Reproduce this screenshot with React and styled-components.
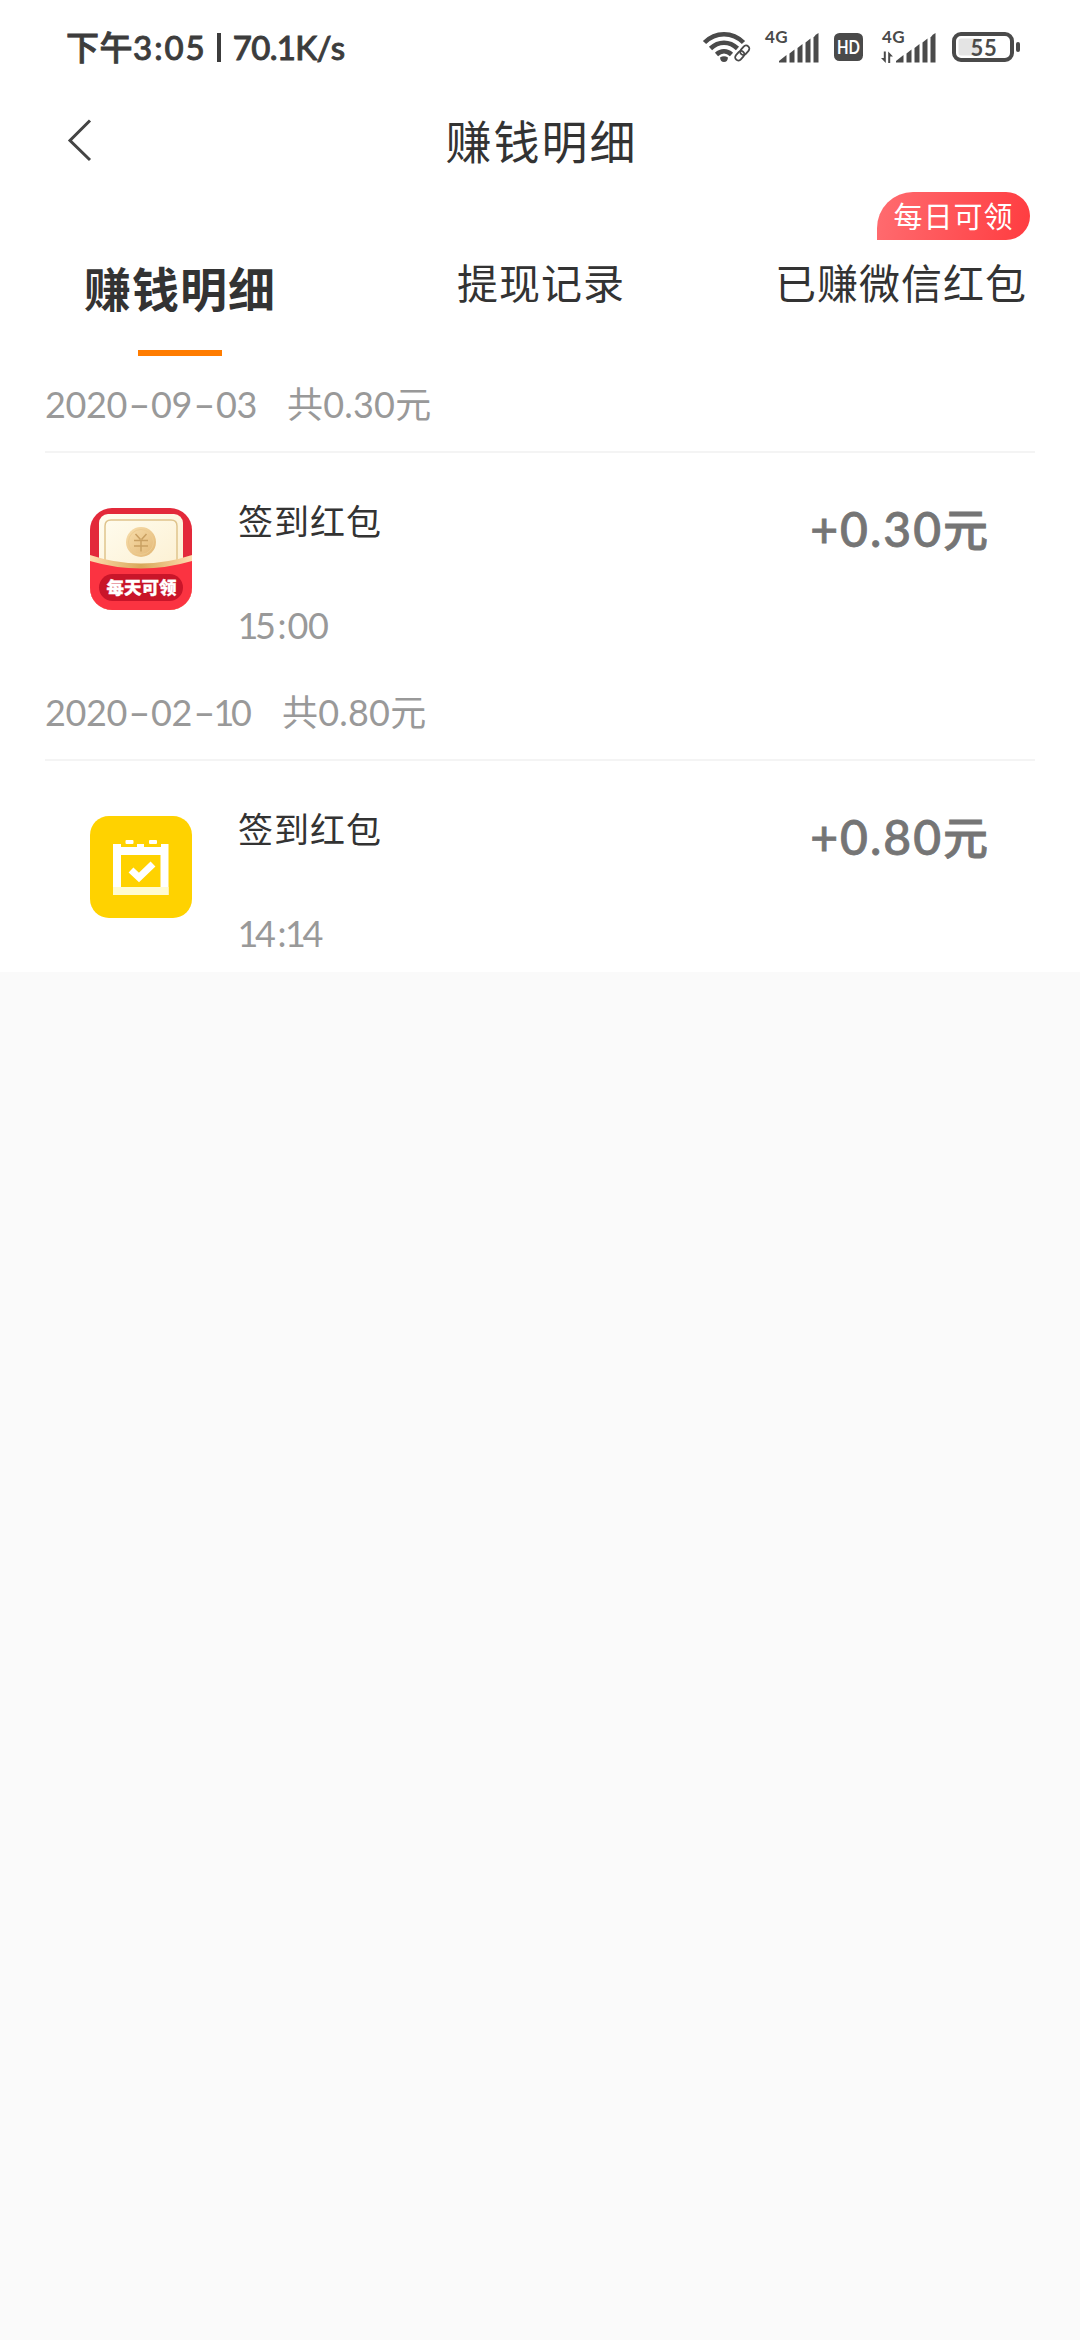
import React from 'react';
import styled, { createGlobalStyle } from 'styled-components';

const GlobalStyle = createGlobalStyle`
  * { box-sizing: border-box; }
  html, body { margin: 0; padding: 0; background: #fafafa; }
  body {
    font-family: Lato, "Noto Sans CJK SC", sans-serif;
    color: #333;
    font-kerning: none;
  }
`;

const Screen = styled.div`
  width: 1080px;
  min-height: 2340px;
  background: #fafafa;
`;

const StatusBar = styled.header`
  display: flex;
  align-items: center;
  justify-content: space-between;
  height: 94px;
  padding: 0 59px 0 66px;
  background: #fff;
`;

const Clock = styled.div`
  display: flex;
  align-items: center;
  font-size: 33px;
  line-height: 40px;
  font-weight: 500;
  color: #3c3c3c;
  white-space: pre;
  -webkit-text-stroke: 0.9px #3c3c3c;
`;

const ClockPart = styled.span`
  letter-spacing: ${(p) => p.$spacing}px;
`;

const ClockRule = styled.i`
  width: 4px;
  height: 29px;
  margin: 0 12px 0 10px;
  background: #3c3c3c;
`;

const StatusIcons = styled.div`
  display: flex;
  align-items: center;
  svg { display: block; }
`;

const Gap = styled.span`
  width: ${(p) => p.$w}px;
`;

const NavBar = styled.nav`
  display: grid;
  grid-template-columns: 120px 1fr 120px;
  align-items: center;
  height: 98px;
  background: #fff;
`;

const BackButton = styled.button`
  display: flex;
  margin: -6px 0 0 66px;
  padding: 0;
  border: 0;
  background: none;
`;

const PageTitle = styled.h1`
  margin: 0;
  padding: 0 0 2px 3px;
  font-size: 46px;
  line-height: 60px;
  font-weight: 400;
  letter-spacing: 2px;
  text-align: center;
`;

const Tabs = styled.div`
  display: grid;
  grid-template-columns: repeat(3, 360px);
  height: 164px;
  background: #fff;
`;

const Tab = styled.div`
  position: relative;
  display: flex;
  flex-direction: column;
  align-items: center;
  padding-top: ${(p) => (p.$active ? 67 : 62)}px;
  padding-left: ${(p) => (p.$active ? 0 : 2)}px;
  font-size: ${(p) => (p.$active ? 47 : 41)}px;
  font-weight: ${(p) => (p.$active ? 700 : 400)};
  line-height: 60px;
  letter-spacing: 1px;
  white-space: nowrap;
`;

const TabLine = styled.i`
  width: 84px;
  height: 6px;
  margin-top: 31px;
  background: #ff7c00;
`;

const Badge = styled.span`
  position: absolute;
  top: 0;
  left: 157px;
  width: 153px;
  height: 48px;
  border-radius: 36px 24px 24px 0;
  background: linear-gradient(100deg, #ff6c70, #ff3c40);
  color: #fff;
  font-size: 29px;
  line-height: 49px;
  letter-spacing: 1px;
  text-align: center;
`;

const Section = styled.section`
  display: flex;
  flex-direction: column;
  height: 308px;
  padding: 0 45px;
  background: #fff;
`;

const DayHeader = styled.div`
  display: flex;
  align-items: center;
  height: 97px;
  border-bottom: 2px solid #f4f4f4;
  font-size: 36px;
  line-height: 44px;
  color: #999;
`;

const DateText = styled.span`
  width: ${(p) => p.$width}px;
  letter-spacing: -0.4px;
  white-space: nowrap;
`;

const DayTotal = styled.span`
  letter-spacing: 0.2px;
`;

const Dash = styled.span`
  display: inline-block;
  width: 24px;
  text-align: center;
  transform: scaleX(1.7);
`;

const NarrowOne = styled.span`
  margin: 0 -3px 0 -2.5px;
`;

const Colon = styled.span`
  margin: 0 1.5px 0 2px;
`;

const Entry = styled.div`
  display: flex;
  align-items: flex-start;
  padding: 0 45px;
`;

const EntryIcon = styled.svg`
  display: block;
  width: 102px;
  height: 102px;
  margin-top: 55px;
`;

const EntryBody = styled.div`
  display: flex;
  flex: 1;
  flex-direction: column;
  gap: 60px;
  padding: 46px 0 0 46px;
`;

const EntryTitle = styled.div`
  font-size: 35px;
  line-height: 44px;
  letter-spacing: 1px;
`;

const EntryTime = styled.div`
  padding-left: 2px;
  font-size: 36px;
  line-height: 44px;
  letter-spacing: -0.4px;
  color: #999;
`;

const Amount = styled.div`
  margin: 48px 2px 0 0;
  font-size: 48px;
  line-height: 56px;
  font-weight: 500;
  letter-spacing: 2px;
  color: #757575;
  -webkit-text-stroke: 0.8px #757575;
  span { font-size: 45px; letter-spacing: 0; }
`;

const INK = '#4a4a4a';

const WifiIcon = () => (
  <svg width="50" height="32" viewBox="0 0 50 32" fill="none">
    <g stroke={INK} strokeWidth="4.6">
      <path d="M2.5 11.5C13.5 .4 30.500 .4 41.500 11.500" />
      <path d="M8.500 17.500C16.500 9.800 27.500 9.800 35.500 17.500" />
      <path d="M14.500 23.500C19 19.300 25 19.300 29.500 23.500" />
    </g>
    <path d="M18 26.500Q22 24 26 26.500Q25.500 31 22 31Q18.500 31 18 26.500Z" fill={INK} />
    <g stroke="#fff" strokeWidth="6">
      <rect x="38" y="15.500" width="7" height="11" rx="3.500" transform="rotate(42 41.500 21)" />
    </g>
    <g stroke={INK} strokeWidth="1.800" strokeLinecap="round">
      <rect x="39.500" y="14" width="6.500" height="10.500" rx="3.250" transform="rotate(42 42.750 19.250)" />
      <rect x="34.500" y="19.500" width="6.500" height="10.500" rx="3.250" transform="rotate(42 37.750 24.750)" />
    </g>
  </svg>
);

const SignalIcon = ({ data }) => (
  <svg width="58" height="50" viewBox="0 -8 58 50" fill={INK}>
    <text x="1" y="12.500" fontFamily="Lato, sans-serif" fontWeight="700" fontSize="17" letterSpacing="0.5">4G</text>
    {data && (
      <g>
        <path d="M2.800 21.500H4.800V33L0 28H2.800Z" />
        <path d="M7.200 33V21.500L12 26.500H9.200V33Z" />
      </g>
    )}
    <path d="M15 32.500V31L22.500 25V32.500Z" />
    <path d="M25.500 23.500L30.500 19.500V32.500H25.500Z" />
    <path d="M33.500 18L38.500 14V32.500H33.500Z" />
    <path d="M41.500 12.500L46.500 8.500V32.500H41.500Z" />
    <path d="M49.500 7.500Q51.500 4 54.500 3V32.500H49.500Z" />
  </svg>
);

const HdIcon = () => (
  <svg width="29" height="29" viewBox="0 0 29 29">
    <rect width="29" height="28" rx="5.500" fill={INK} />
    <text x="3" y="20.500" textLength="23" lengthAdjust="spacingAndGlyphs" fontFamily="Lato, sans-serif" fontWeight="700" fontSize="18" fill="#fff">HD</text>
  </svg>
);

const BatteryIcon = () => (
  <svg width="69" height="30" viewBox="0 0 69 30">
    <rect x="2" y="2" width="58" height="26" rx="7" fill="#fff" stroke={INK} strokeWidth="4" />
    <path d="M9 6.500H27V23.500H9Q6.500 23.500 6.500 21V9Q6.500 6.500 9 6.500Z" fill="#e4e4e4" />
    <text x="32" y="23.500" textAnchor="middle" fontFamily="Lato, sans-serif" fontWeight="700" fontSize="22" letterSpacing="0.8" fill={INK}>55</text>
    <rect x="64" y="10" width="4" height="10" rx="2" fill={INK} />
  </svg>
);

const RedPacketIcon = () => (
  <EntryIcon viewBox="0 0 102 102">
    <defs>
      <clipPath id="packet"><rect width="102" height="102" rx="22" /></clipPath>
      <linearGradient id="card" x1="0" y1="0" x2="1" y2="1">
        <stop offset="0" stopColor="#fffdf0" /><stop offset="1" stopColor="#fcefd0" />
      </linearGradient>
      <linearGradient id="coin" x1="0" y1="0" x2="1" y2="1">
        <stop offset="0" stopColor="#f8dfad" /><stop offset="1" stopColor="#e2b674" />
      </linearGradient>
      <linearGradient id="rim" x1="0" y1="0" x2="1" y2="0">
        <stop offset="0" stopColor="#ffdcae" /><stop offset=".5" stopColor="#d8a85a" /><stop offset="1" stopColor="#ffdcae" />
      </linearGradient>
    </defs>
    <g clipPath="url(#packet)">
      <rect width="102" height="102" fill="#e3293a" />
      <rect x="9" y="6" width="84" height="60" rx="9" fill="url(#card)" />
      <path d="M15 60V18Q15 12 21 12H81Q87 12 87 18V60" fill="none" stroke="#dfc48c" strokeWidth="1.500" />
      <circle cx="51" cy="34" r="15" fill="url(#coin)" />
      <circle cx="51" cy="34" r="12.500" fill="none" stroke="#eccb90" strokeWidth="1" />
      <path d="M45.500 26L50.500 31.500M56.500 26L51.500 31.500M44 32.500H58M44 38H58M51 32V43.500" stroke="#c9a062" strokeWidth="1.500" fill="none" />
      <path d="M0 47Q51 64 102 47V102H0Z" fill="url(#rim)" />
      <path d="M0 53Q51 68 102 53V102H0Z" fill="#fb3341" />
      <rect x="9" y="66" width="84" height="27" rx="13.500" fill="#c91529" />
      <text x="51.500" y="86" textAnchor="middle" fontFamily="'Noto Sans CJK SC', sans-serif" fontWeight="900" fontSize="17.500" fill="#fff" stroke="#fff" strokeWidth=".3">每天可领</text>
    </g>
  </EntryIcon>
);

const CalendarIcon = () => (
  <EntryIcon viewBox="0 0 102 102">
    <rect width="102" height="102" rx="19" fill="#ffd200" />
    <path d="M23 28H31V31H47V28H54V31H71V28H78.500V79H23Z" fill="#fff" />
    <rect x="23" y="71" width="55.500" height="8" fill="#fffbd0" />
    <rect x="31" y="39" width="39.500" height="32" fill="#ffd200" />
    <rect x="35.500" y="24" width="8" height="4" rx="1" fill="#fff" />
    <rect x="59" y="24" width="8" height="4" rx="1" fill="#fff" />
    <path d="M41 54L49 61.500L63 48" fill="none" stroke="#fff" strokeWidth="7" />
  </EntryIcon>
);

// Digits with a proportional "1" and wider separators.
const Figures = ({ children }) =>
  [...children].map((ch, i) => {
    if (ch === '1') return <NarrowOne key={i}>1</NarrowOne>;
    if (ch === '-') return <Dash key={i}>-</Dash>;
    if (ch === ':') return <Colon key={i}>:</Colon>;
    return ch;
  });

const days = [
  { date: '2020-09-03', width: 242, total: '共0.30元', title: '签到红包', time: '15:00', amount: '+0.30', Icon: RedPacketIcon },
  { date: '2020-02-10', width: 237, total: '共0.80元', title: '签到红包', time: '14:14', amount: '+0.80', Icon: CalendarIcon },
];

export default function App() {
  return (
    <Screen>
      <GlobalStyle />
      <StatusBar>
        <Clock>
          <ClockPart $spacing={0.5}>下午</ClockPart>
          <ClockPart $spacing={2}>3:05</ClockPart>
          <ClockRule />
          <ClockPart $spacing={-0.7}>70.1K/s</ClockPart>
        </Clock>
        <StatusIcons>
          <WifiIcon />
          <Gap $w={12} />
          <SignalIcon />
          <Gap $w={12} />
          <HdIcon />
          <Gap $w={18} />
          <SignalIcon data />
          <Gap $w={13} />
          <BatteryIcon />
        </StatusIcons>
      </StatusBar>
      <NavBar>
        <BackButton aria-label="返回">
          <svg width="28" height="44" viewBox="0 0 28 44" fill="none">
            <path d="M24 2.500L4 22.500L24 42" stroke="#444" strokeWidth="3" />
          </svg>
        </BackButton>
        <PageTitle>赚钱明细</PageTitle>
      </NavBar>
      <Tabs>
        <Tab $active>赚钱明细<TabLine /></Tab>
        <Tab>提现记录</Tab>
        <Tab>已赚微信红包<Badge>每日可领</Badge></Tab>
      </Tabs>
      {days.map(({ date, width, total, title, time, amount, Icon }) => (
        <Section key={date}>
          <DayHeader>
            <DateText $width={width}><Figures>{date}</Figures></DateText>
            <DayTotal>{total}</DayTotal>
          </DayHeader>
          <Entry>
            <Icon />
            <EntryBody>
              <EntryTitle>{title}</EntryTitle>
              <EntryTime><Figures>{time}</Figures></EntryTime>
            </EntryBody>
            <Amount>{amount}<span>元</span></Amount>
          </Entry>
        </Section>
      ))}
    </Screen>
  );
}
